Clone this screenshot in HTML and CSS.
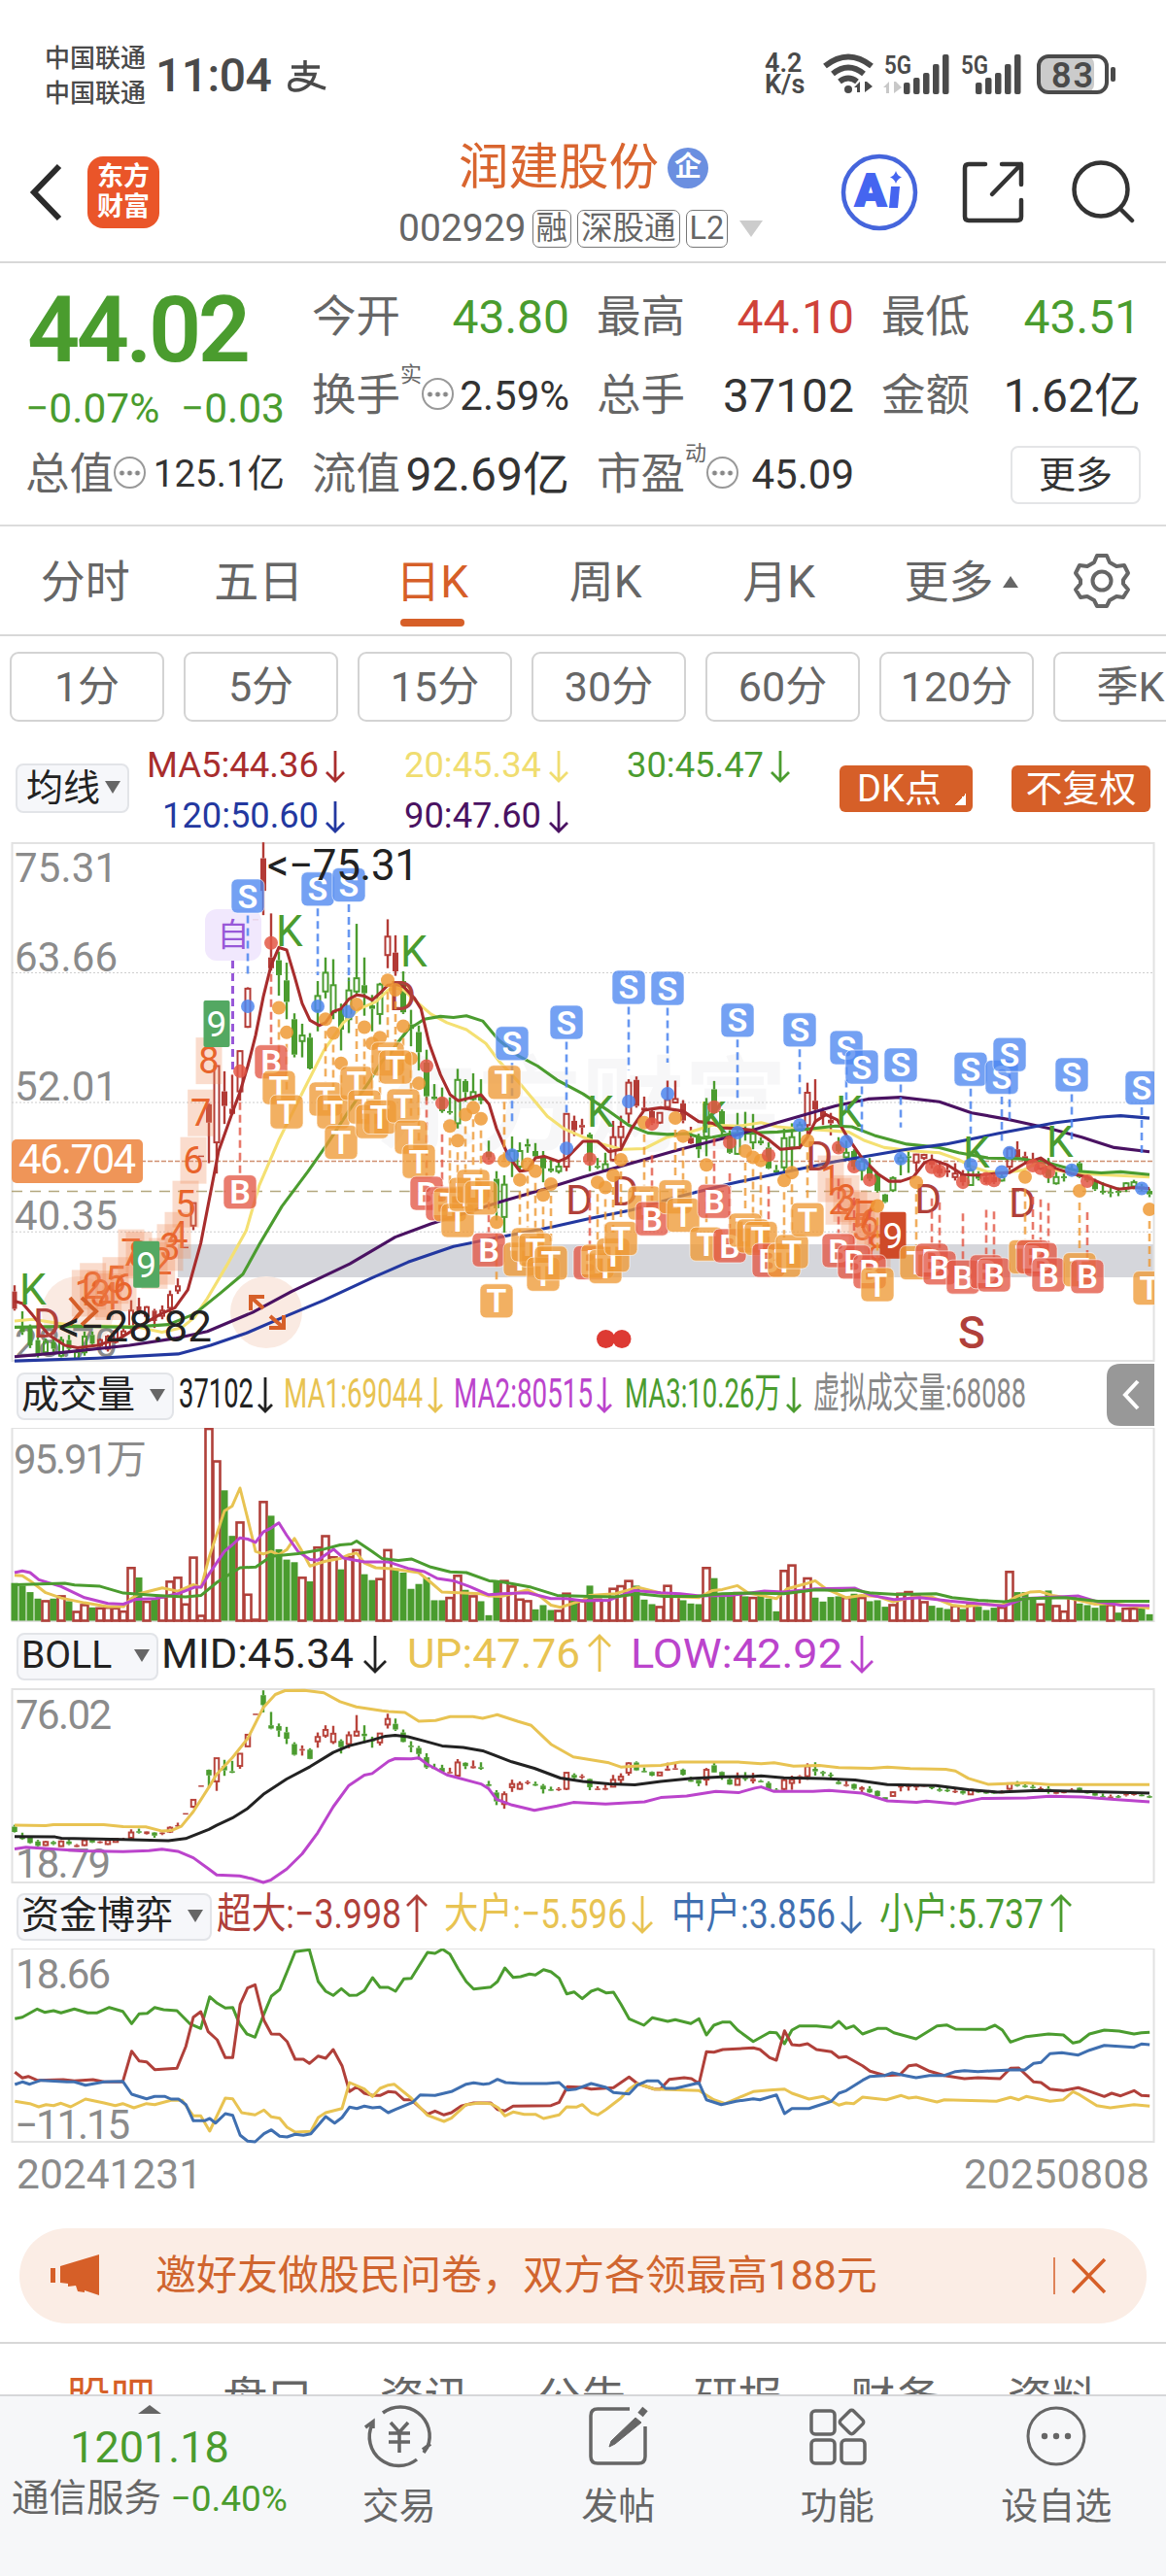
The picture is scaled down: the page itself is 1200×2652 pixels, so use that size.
FILE: index.html
```html
<!DOCTYPE html>
<html lang="zh-CN">
<head>
  <meta charset="UTF-8">
  <meta name="viewport" content="width=device-width, initial-scale=1.0">
  <title>润建股份 002929</title>
  <link rel="stylesheet" href="styles.css">
</head>
<body>
  <div class="status">
    <div class="carrier"><span>中国联通</span><span>中国联通</span></div>
    <div class="clock">11:04</div>
    <svg class="pay" width="42" height="34" viewBox="0 0 42 34" fill="none" stroke="#4a4a4a" stroke-width="3.500">
      <path d="M19 0 V14 M5 7 H34 M8 14.500 H29 C27 24 17 32 8 31 C1 30 1 22 8 20 C16 18 26 25 40 29"/>
    </svg>
    <div class="speed"><span>4.2</span><span>K/s</span></div>
    <svg class="status-icons" width="304" height="48" viewBox="845 53 304 48">
      <g fill="none" stroke="#4a4a4a" stroke-width="6">
        <path d="M849 68 Q873 49 897 68"/>
        <path d="M857 76 Q873 63 889 76"/>
        <path d="M864 84 Q873 77 882 84"/>
      </g>
      <circle cx="873" cy="92" r="4" fill="#4a4a4a"/>
      <path d="M879 90 l6 -6 v11 h-3 v-5z M890 95 v-11 h2 l6 5z" fill="#4a4a4a"/>
      <path d="M909 90 l6 -6 v12 h-3 v-6z M920 96 v-12 h2 l6 6z" fill="#c8c8c8"/>
      <g fill="#4a4a4a">
        <rect x="930" y="85" width="6.500" height="12" rx="2"/><rect x="940" y="80" width="6.500" height="17" rx="2"/>
        <rect x="950" y="75" width="6.500" height="22" rx="2"/><rect x="960" y="66" width="6.500" height="31" rx="2"/>
        <rect x="970" y="56" width="6.500" height="41" rx="2"/>
        <rect x="1004" y="85" width="6.500" height="12" rx="2"/><rect x="1014" y="80" width="6.500" height="17" rx="2"/>
        <rect x="1024" y="75" width="6.500" height="22" rx="2"/><rect x="1034" y="66" width="6.500" height="31" rx="2"/>
        <rect x="1044" y="56" width="6.500" height="41" rx="2"/>
        <rect x="1143" y="69" width="5" height="15" rx="2"/>
      </g>
      <rect x="1069" y="58" width="57" height="37" rx="8" fill="#cbcbcb"/>
      <rect x="1069" y="58" width="70" height="37" rx="10" fill="none" stroke="#4a4a4a" stroke-width="4"/>
      <g class="signal-text">
        <text x="910" y="76" textLength="28" lengthAdjust="spacingAndGlyphs">5G</text>
        <text x="989" y="76" textLength="28" lengthAdjust="spacingAndGlyphs">5G</text>
        <text class="battery" x="1082" y="90" textLength="43">83</text>
      </g>
    </svg>
  </div>

  <header class="header">
    <svg class="back" width="36" height="60" viewBox="0 0 36 60"><path d="M31 3 L5 30 L31 57" fill="none" stroke="#2b2b2b" stroke-width="6"/></svg>
    <div class="logo"><span>东方</span><span>财富</span></div>
    <div class="title">
      <div class="name">润建股份<span class="corp">企</span></div>
      <div class="code">002929<span class="tag">融</span><span class="tag">深股通</span><span class="tag">L2</span><i class="caret"></i></div>
    </div>
    <svg class="actions" width="306" height="84" viewBox="862 156 306 84">
      <circle cx="905" cy="198" r="37" fill="none" stroke="#4565dc" stroke-width="4.500"/>
      <text class="ai" x="880" y="212">A</text>
      <path d="M917 192 h9 l-2 22 h-9z" fill="#4565f0"/>
      <path d="M922 176 q1.500 5 6 6.500 q-4.500 1.500 -6 6.500 q-1.500 -5 -6 -6.500 q4.500 -1.500 6 -6.500z" fill="#4565f0"/>
      <g fill="none" stroke="#333" stroke-width="4.500" stroke-linecap="round" stroke-linejoin="round">
        <path d="M1014 169 H997 Q993 169 993 173 V223 Q993 227 997 227 H1047 Q1051 227 1051 223 V206"/>
        <path d="M1031 169 H1051 V190 M1051 169 L1021 200"/>
        <circle cx="1133" cy="195" r="27.500"/>
        <path d="M1153 215 L1165 227"/>
      </g>
    </svg>
  </header>

  <section class="quote">
    <div class="quote-main">
      <div class="price">44.02</div>
      <div class="change"><span>−0.07%</span><span>−0.03</span></div>
      <div class="cell"><label>总值</label><i class="info"></i><b class="small">125.1亿</b></div>
    </div>
    <div class="quote-grid">
      <div class="cell"><label>今开</label><b class="down">43.80</b></div>
      <div class="cell"><label>最高</label><b class="up">44.10</b></div>
      <div class="cell"><label>最低</label><b class="down">43.51</b></div>
      <div class="cell"><label>换手</label><sup>实</sup><i class="info"></i><b class="mid">2.59%</b></div>
      <div class="cell"><label>总手</label><b>37102</b></div>
      <div class="cell"><label>金额</label><b>1.62亿</b></div>
      <div class="cell"><label>流值</label><b>92.69亿</b></div>
      <div class="cell"><label>市盈</label><sup>动</sup><i class="info"></i><b class="mid">45.09</b></div>
      <div class="cell"><button class="more">更多</button></div>
    </div>
  </section>

  <nav class="period">
    <a>分时</a><a>五日</a><a class="active">日K</a><a>周K</a><a>月K</a><a class="wide">更多<i class="caret-up"></i></a>
    <svg class="gear" width="60" height="60" viewBox="-30 -30 60 60" fill="none" stroke="#666" stroke-width="4" stroke-linejoin="round">
      <path d="M-5 -26 H5 L8 -19 L15 -15 L23 -16 L27 -8 L22 -1 V3 L27 9 L22 17 L15 16 L8 20 L5 26 H-5 L-8 20 L-15 16 L-22 17 L-27 9 L-22 3 V-1 L-27 -8 L-23 -16 L-15 -15 L-8 -19z"/>
      <circle r="9.500"/>
    </svg>
  </nav>

  <div class="minutes">
    <span>1分</span><span>5分</span><span>15分</span><span>30分</span><span>60分</span><span>120分</span><span>季K</span>
  </div>

  <div class="ma">
    <button class="pick ma-pick">均线<i class="caret-down"></i></button>
    <svg class="ma-values" id="maLegend" width="680" height="96" viewBox="150 764 680 96"></svg>
    <button class="solid dk">DK点</button>
    <button class="solid">不复权</button>
  </div>

  <svg class="plot" id="priceChart" width="1200" height="540" viewBox="0 864 1200 540"></svg>

  <div class="legend">
    <button class="pick vol-pick">成交量<i class="caret-down"></i></button>
    <svg id="volLegend" width="1017" height="66" viewBox="183 1404 1017 66"></svg>
  </div>
  <svg class="plot" id="volChart" width="1200" height="202" viewBox="0 1470 1200 202"></svg>

  <div class="legend">
    <button class="pick boll-pick">BOLL<i class="caret-down"></i></button>
    <svg id="bollLegend" width="1033" height="66" viewBox="167 1672 1033 66"></svg>
  </div>
  <svg class="plot" id="bollChart" width="1200" height="202" viewBox="0 1738 1200 202"></svg>

  <div class="legend">
    <button class="pick fund-pick">资金博弈<i class="caret-down"></i></button>
    <svg id="fundLegend" width="979" height="66" viewBox="221 1940 979 66"></svg>
  </div>
  <svg class="plot" id="fundChart" width="1200" height="202" viewBox="0 2006 1200 202"></svg>

  <div class="dates"><span>20241231</span><span>20250808</span></div>

  <div class="notice">
    <svg width="52" height="44" viewBox="0 0 52 44" fill="#d65f28"><path d="M0 14 h5 v15 h-5z M10 12 L50 0 V42 L35 37 V39 L28 38 L26 32 L18 33 V30 L10 29z"/></svg>
    <p>邀好友做股民问卷，双方各领最高188元</p>
    <svg class="close" width="56" height="40" viewBox="0 0 56 40" fill="none" stroke="#d65f28"><path d="M1 1 V39" stroke-width="1.500"/><path d="M20 3 L53 37 M53 3 L20 37" stroke-width="3.500"/></svg>
  </div>

  <nav class="info-tabs">
    <a class="active">股吧</a><a>盘口</a><a>资讯</a><a>公告</a><a>研报</a><a>财务</a><a>资料</a>
  </nav>

  <footer class="bottom">
    <div class="index">
      <i class="caret-up"></i>
      <strong>1201.18</strong>
      <p>通信服务 <em>−0.40%</em></p>
    </div>
    <a>
      <svg width="74" height="66" viewBox="-37 -33 74 66" fill="none" stroke="#666" stroke-width="3.500">
        <path d="M-17 -24 A30 30 0 0 1 29 11 M24 14 L32 8 M29 11 L25 17"/>
        <path d="M18 24 A30 30 0 0 1 -28 -12 M-35 -9 L-27 -15 V-8"/>
        <path d="M-9 -14 L0 -4 L9 -14 M0 -4 V17 M-11 -3 H11 M-11 6 H11"/>
      </svg>交易</a>
    <a>
      <svg width="74" height="66" viewBox="-37 -33 74 66" fill="none" stroke="#666" stroke-width="3.500">
        <path d="M12 -28 H-21 Q-28 -28 -28 -21 V21 Q-28 28 -21 28 H21 Q28 28 28 21 V-10"/>
        <path d="M18 -19 L24 -14 L-3 8 L-9 11 L-7 5z" fill="#666" stroke-width="1"/><path d="M23 -22 L28 -28" stroke-width="7"/>
      </svg>发帖</a>
    <a>
      <svg width="74" height="66" viewBox="-37 -33 74 66" fill="none" stroke="#666" stroke-width="3.500">
        <rect x="-27" y="-26" width="24" height="24" rx="4"/><rect x="-27" y="4" width="24" height="24" rx="4"/><rect x="4" y="4" width="24" height="24" rx="4"/>
        <rect x="5" y="-24" width="19" height="19" rx="3" transform="rotate(45 14.500 -14.500)"/>
      </svg>功能</a>
    <a>
      <svg width="74" height="66" viewBox="-37 -33 74 66" fill="none" stroke="#666" stroke-width="3">
        <circle r="29"/><g fill="#666" stroke="none"><circle cx="-12" r="3.200"/><circle r="3.200"/><circle cx="12" r="3.200"/></g>
      </svg>设自选</a>
  </footer>
  <script src="charts.js"></script>
</body>
</html>
```
FILE: styles.css
```css
* {
  box-sizing: border-box;
}
body {
  margin: 0;
  width: 1200px;
  overflow-x: hidden;
  background: #fff;
  color: #333;
  font-family: Roboto, "Noto Sans CJK SC", sans-serif;
  line-height: 1;
}
button {
  font-family: inherit;
  line-height: 1;
  padding: 0;
}
svg {
  display: block;
  flex: none;
}
svg text {
  white-space: pre;
}

/* status bar */
.status {
  display: flex;
  height: 136px;
  padding: 42px 0 0 46px;
  color: #4a4a4a;
  font-weight: 500;
}
.carrier {
  display: flex;
  flex-direction: column;
  width: 114px;
  font-size: 26px;
  line-height: 36px;
}
.clock {
  width: 135px;
  font-size: 48px;
  line-height: 72px;
  letter-spacing: -0.5px;
}
.pay {
  margin: 20px 450px 0 0;
}
.speed {
  display: flex;
  flex-direction: column;
  width: 58px;
  padding-top: 12px;
  font-size: 27px;
  font-weight: 600;
  line-height: 22px;
}
.status-icons {
  margin-top: 11px;
}
.signal-text {
  font-size: 26px;
  font-weight: 600;
  fill: #4a4a4a;
}
.battery {
  font-size: 36px;
}

/* header */
.header {
  display: flex;
  align-items: flex-start;
  height: 135px;
  border-bottom: 2px solid #d8d8d8;
}
.back {
  margin: 32px 24px 0 30px;
}
.logo {
  display: flex;
  flex-direction: column;
  justify-content: center;
  width: 74px;
  height: 74px;
  margin-top: 25px;
  border-radius: 16px;
  background: #ea5529;
  color: #fff;
  font-size: 27px;
  font-weight: 700;
  line-height: 31px;
  text-align: center;
}
.title {
  width: 698px;
  padding-left: 246px;
}
.name {
  display: flex;
  align-items: center;
  gap: 9px;
  height: 74px;
  padding-left: 62px;
  color: #d9652f;
  font-size: 51.500px;
}
.corp {
  width: 42px;
  height: 42px;
  border-radius: 50%;
  background: #6b8fe0;
  color: #fff;
  font-size: 28px;
  font-weight: 700;
  line-height: 40px;
  text-align: center;
}
.code {
  display: flex;
  align-items: center;
  gap: 6px;
  height: 50px;
  color: #666;
  font-size: 39px;
}
.tag {
  padding: 0 3px;
  border: 1.500px solid #777;
  border-radius: 7px;
  font-size: 32.500px;
  line-height: 37px;
}
.caret {
  margin-left: 6px;
  border: 12px solid transparent;
  border-top: 17px solid #ccc;
  border-bottom: 0;
}
.actions {
  margin-top: 20px;
}
.ai {
  font-size: 47px;
  font-weight: 900;
  fill: #4565f0;
  stroke: #4565f0;
  stroke-width: 2px;
}

/* quote */
.quote {
  display: flex;
  gap: 28px;
  height: 271px;
  padding: 15px 26px 0 26px;
  border-bottom: 2px solid #dcdcdc;
}
.quote-main {
  width: 267px;
}
.price {
  height: 105px;
  padding-left: 2px;
  color: #4a9c2e;
  font-size: 95px;
  font-weight: 600;
  line-height: 108px;
  letter-spacing: -3.500px;
}
.change {
  display: flex;
  justify-content: space-between;
  height: 57px;
  color: #4a9c2e;
  font-size: 42.500px;
  line-height: 59px;
}
.quote-grid {
  display: grid;
  flex: 1;
  grid-template-columns: 265px 265px 1fr;
  grid-auto-rows: 81px;
  column-gap: 28px;
}
.cell {
  display: flex;
  align-items: center;
  height: 81px;
  white-space: nowrap;
}
.cell label {
  color: #666;
  font-size: 45.500px;
}
.cell b {
  margin-left: auto;
  font-size: 48px;
  font-weight: 400;
}
.cell .mid {
  font-size: 42px;
}
.cell .small {
  font-size: 38.500px;
}
.cell .down {
  color: #4a9c2e;
}
.cell .up {
  color: #cf4239;
}
.cell sup {
  align-self: flex-start;
  margin-top: 8px;
  color: #666;
  font-size: 22px;
}
.info {
  width: 33px;
  height: 33px;
  margin-top: -4px;
  border: 2.500px solid #999;
  border-radius: 50%;
  background: radial-gradient(circle, #888 2.200px, transparent 2.800px) center / 8px 8px content-box;
  background-position: 50% 50%;
  background-repeat: repeat-x;
  padding: 0 2px;
}
.more {
  width: 134px;
  height: 60px;
  margin-left: auto;
  border: 2px solid #e4e5e7;
  border-radius: 8px;
  background: #fff;
  color: #333;
  font-size: 38px;
}

/* period tabs */
.period {
  display: flex;
  align-items: flex-start;
  height: 113px;
  border-bottom: 2px solid #d8d8d8;
  color: #666;
  font-size: 46px;
}
.period a {
  display: flex;
  flex-direction: column;
  align-items: center;
  width: 178.500px;
  padding: 34px 3px 0 0;
}
.period .active {
  color: #d65f28;
}
.period .active::after {
  width: 66px;
  height: 8px;
  margin-top: 15px;
  border-radius: 4px;
  background: #d65f28;
  content: "";
}
.period .wide {
  flex-direction: row;
  width: 211px;
  padding-left: 38px;
}
.caret-up {
  margin-left: 9px;
  border: 8px solid transparent;
  border-top: 0;
  border-bottom: 12px solid #666;
}
.gear {
  margin-top: 26px;
}
.minutes {
  display: flex;
  gap: 20px;
  height: 104px;
  padding: 16px 0 0 10px;
}
.minutes span {
  flex: none;
  width: 159px;
  height: 72px;
  border: 2px solid #d3d3d3;
  border-radius: 9px;
  color: #666;
  font-size: 43px;
  line-height: 68px;
  text-align: center;
}

/* moving average row */
.ma {
  display: flex;
  align-items: center;
  height: 105px;
  padding-left: 16px;
}
.pick {
  display: flex;
  flex: none;
  align-items: center;
  justify-content: space-between;
  height: 49px;
  padding: 0 7px 2px 3px;
  border: 2px solid #e2e4e8;
  border-radius: 8px;
  background: #f6f7fa;
  color: #222;
  font-size: 39px;
}
.vol-pick {
  width: 162px;
}
.boll-pick {
  width: 146px;
}
.fund-pick {
  width: 201px;
}
.caret-down {
  border: 8px solid transparent;
  border-top: 13px solid #666;
  border-bottom: 0;
}
.ma-pick {
  height: 51px;
  width: 117px;
  padding: 0 7px 2px 9px;
  font-size: 38px;
}
.ma-values {
  margin: 0 34px 0 17px;
}
.solid {
  flex: none;
  width: 143px;
  height: 48px;
  margin-right: 40px;
  border: 0;
  border-radius: 6px;
  background: #d65f28;
  color: #fff;
  font-size: 38px;
}
.dk {
  width: 137px;
  padding-right: 14px;
  background: linear-gradient(135deg, transparent 50%, #fff 50%) 118px 29px / 12px 12px no-repeat #d65f28;
}

/* charts */
.legend {
  display: flex;
  align-items: center;
  gap: 4px;
  height: 66px;
  padding-left: 17px;
}
.legend text {
  font-size: 43px;
}
.ma-values text {
  font-size: 36.500px;
}
.axis {
  fill: #8b8b8b;
  font-size: 42px;
}
.dates {
  display: flex;
  justify-content: space-between;
  padding: 6px 17px 0;
  color: #8b8b8b;
  font-size: 42.500px;
  line-height: 50px;
}

/* notice */
.notice {
  display: flex;
  align-items: center;
  height: 98px;
  margin: 30px 20px 19px;
  padding: 0 40px 0 32px;
  border-radius: 49px;
  background: #fbede5;
  color: #d0652f;
  font-size: 42px;
}
.notice p {
  margin: 0 auto 0 56px;
}
.info-tabs {
  display: flex;
  height: 54px;
  overflow: hidden;
  padding: 33px 0 0 33px;
  border-top: 2px solid #d8d8d8;
  color: #666;
  font-size: 46px;
}
.info-tabs a {
  width: 161.500px;
  text-align: center;
}
.info-tabs .active {
  color: #d65f28;
}
.bottom {
  display: flex;
  height: 187px;
  border-top: 2px solid #d6d7d9;
  background: #f6f7f9;
  color: #666;
  font-size: 38px;
}
.bottom a {
  display: flex;
  flex-direction: column;
  align-items: center;
  gap: 20px;
  width: 225.500px;
  padding-top: 8px;
}
.index {
  display: flex;
  flex-direction: column;
  align-items: center;
  width: 298px;
  padding: 9px 0 0 10px;
}
.index .caret-up {
  border-width: 0 12px 9px;
  margin: 0;
}
.index strong {
  margin-top: 12px;
  color: #4a9c2e;
  font-size: 45px;
  font-weight: 400;
  line-height: 46px;
}
.index p {
  margin: 10px 0 0;
  font-size: 38.500px;
  white-space: nowrap;
}
.index em {
  color: #4a9c2e;
  font-size: 37px;
  font-style: normal;
}
```
FILE: charts.js
```js
const RED = '#b0403a';
const GREEN = '#4b9c2f';
const GOLD = '#e8c352';
const PINK = '#bb44cc';
const BLUE = '#3f6fb0';

// kind (upper case = hollow), high, top, bottom, low, volume top
const candles = [
  ['r',1297,1315,1365,1370,507],['g',1372,1415,1432,1440,515],['g',1410,1420,1470,1478,535],['g',1440,1455,1497,1505,555],
  ['G',1450,1460,1490,1497,560],['g',1450,1460,1480,1490,555],['G',1445,1455,1500,1505,545],['g',1440,1455,1480,1490,563],
  ['G',1480,1490,1508,1512,593],['G',1430,1445,1490,1500,572],['g',1430,1440,1465,1470,582],['R',1450,1455,1470,1475,582],
  ['R',1440,1445,1480,1488,580],['R',1425,1430,1460,1465,582],['R',1420,1430,1440,1445,592],['R',1340,1370,1420,1425,458],
  ['r',1333,1358,1372,1380,490],['R',1357,1360,1385,1390,562],['r',1365,1370,1400,1420,558],['R',1355,1370,1385,1395,548],
  ['R',1312,1325,1362,1375,500],['R',1277,1300,1312,1322,488],['R',1186,1186,1187,1187,570],['R',1060,1060,1125,1138,426],
  ['R',923,923,924,924,605],['r',772,775,828,945,30],['R',665,665,885,975,130],['r',680,738,780,832,222],
  ['r',690,788,803,806,362],['R',620,622,738,765,318],['R',438,442,552,555,540],['R',241,241,242,242,617],
  ['r',20,66,160,230,255],['r',225,352,383,390,300],['g',335,360,403,462,403],['g',367,418,480,530,435],
  ['g',513,530,632,640,443],['G',543,577,593,640,488],['g',570,583,672,675,502],['G',420,463,505,565,395],
  ['G',352,396,450,470,360],['G',357,432,510,530,425],['g',485,500,560,620,465],['G',410,447,530,570,425],
  ['G',255,412,450,460,403],['g',352,432,455,520,480],['g',460,490,500,565,498],['G',425,430,515,545,492],
  ['R',242,292,345,383,403],['r',288,338,392,405,462],['g',392,420,510,515,475],['g',503,545,558,608,525],
  ['g',548,567,625,678,510],['g',618,655,752,765,490],['g',717,753,760,763,560],['g',727,757,795,800,560],
  ['G',755,795,800,805,550],['G',673,705,830,845,482],['g',703,708,740,768,528],['G',686,740,760,765,545],
  ['g',703,750,765,775,563],['g',880,912,928,935,606],['g',968,990,1075,1110,500],['G',980,1007,1100,1145,498],
  ['G',868,910,940,985,515],['G',885,910,955,965,555],['G',875,890,897,915,560],['g',887,910,925,930,588],
  ['g',910,925,960,1000,575],['g',935,960,968,972,590],['G',940,955,968,975,590],['R',802,803,955,968,537],
  ['r',808,823,850,867,560],['R',817,835,842,862,560],['g',857,862,940,968,515],['G',930,953,958,962,555],
  ['G',915,948,965,970,558],['R',823,870,935,940,522],['R',808,840,870,910,514],['R',703,713,802,830,498],
  ['r',695,705,780,785,515],['r',753,785,793,795,558],['r',790,795,830,835,572],['R',800,800,828,832,578],
  ['R',707,763,783,785,513],['R',707,760,770,773,545],['r',763,773,822,830,560],['r',840,872,888,890,570],
  ['g',860,870,905,930,572],['G',757,775,868,925,458],['g',708,732,800,802,492],['g',790,795,835,870,545],
  ['g',850,865,915,918,540],['G',800,860,918,920,535],['g',797,850,860,880,548],['G',803,860,885,905,550],
  ['g',870,880,888,893,545],['g',885,900,960,962,555],['g',950,965,972,975,594],['G',840,873,957,970,467],
  ['G',830,870,900,965,450],['G',825,835,850,905,530],['R',713,742,835,870,490],['r',703,765,790,830,552],
  ['r',785,795,810,835,564],['r',800,820,830,865,550],['g',870,890,910,915,548],['G',880,915,928,935,550],
  ['g',905,910,955,965,540],['G',930,940,965,995,550],['g',930,955,990,997,563],['g',970,975,1025,1030,560],
  ['g',1033,1035,1057,1060,580],['G',983,988,1023,1028,572],['G',920,930,940,980,537],['G',910,925,930,973,532],
  ['R',918,920,943,970,540],['R',918,921,930,935,563],['r',920,935,950,960,577],['r',943,960,975,983,583],
  ['r',950,965,972,985,587],['R',945,975,985,995,575],['r',965,975,1000,1010,587],['G',955,965,1008,1010,572],
  ['g',968,975,990,995,580],['r',975,985,1000,1005,590],['r',975,985,1000,1005,583],['G',970,985,995,998,580],
  ['R',900,903,955,965,470],['r',882,905,928,935,535],['r',912,925,935,945,535],['r',915,935,945,955,555],
  ['R',935,950,960,965,570],['g',930,955,985,1002,530],['G',970,985,1003,1007,575],['G',975,983,988,998,592],
  ['G',950,965,975,980,550],['g',940,945,985,988,570],['g',975,985,995,1000,575],['g',990,995,1020,1025,583],
  ['g',1000,1025,1030,1035,572],['G',1010,1028,1032,1043,572],['g',1015,1025,1030,1040,598],['G',1000,1003,1018,1028,583],
  ['G',993,1000,1012,1020,583],['g',1005,1012,1020,1025,585],['g',1018,1025,1035,1043,603]
];

// markers: candle index, badge centre, dot centre
const sells = [[30,175,493],[39,155,493],[43,143,508],[64,600,922],[71,539,902],[79,438,767],[84,441,745],[93,533,857],
  [101,561,835],[107,612,883],[109,668,948],[114,662,932],[123,674,950],[127,697,970],[128,632,915],[136,690,965],[145,728,1018]];
const trades = [[34,727,497],[35,797,568],[40,760,530],[41,797,570],[42,885,657],[44,715,487],[45,783,553],[46,825,600],
  [47,812,583],[48,645,418],[49,668,445],[50,780,550],[51,870,643],[52,940,715],[56,1065,838],[57,1110,880],[58,1035,805],
  [59,1012,785],[60,1045,817],[62,1342,1115],[63,712,938],[65,1222,993],[66,1180,948],[67,1195,968],[68,1265,1037],
  [69,1233,1005],[75,1228,1000],[76,1243,1015],[77,1210,980],[78,1162,935],[81,1060,828],[85,1042,815],[86,1095,867],
  [89,1178,950],[94,1138,910],[95,1155,928],[96,1162,937],[99,1225,995],[100,1200,972],[102,1108,880],[111,1295,1068],
  [116,1232,1000],[130,1215,985],[137,1252,1025],[146,1305,1078]];
const buys = [[29,1028,680],[33,653,310],[53,1032,665],[55,1062,772],[61,1195,930],[74,1232,933],[82,1105,832],[90,1055,783],
  [92,1183,885],[97,1225,922],[106,1197,900],[108,1230,955],[110,1258,993],[118,1225,957],[119,1247,968],[122,1273,1000],
  [125,1258,990],[126,1267,995],[131,1215,952],[132,1223,960],[133,1267,970],[138,1272,997]];

// each line is made of three runs of x,y pairs (left, middle and right part)
const maLines = [
  ['#f4e072', '45,1400 100,1395 240,1415 350,1415 430,1418 500,1432 560,1420 600,1390 640,1335 700,1240 760,1140 800,1010 860,880 940,730 1000,620 1060,540 1110,500 1160,480 1200,445',
    '20,440 45,445 80,475 130,515 180,540 240,560 300,600 340,650 400,710 450,765 490,810 540,845 600,870 660,890 720,905 790,903 860,870 930,855 1000,835 1080,838 1150,828',
    '0,840 60,845 150,850 220,855 270,880 330,900 420,910 500,915 560,935 600,955 650,970 700,972 760,965 800,945 860,965 930,975 1149,985'],
  ['#4b9c2f', '45,1418 240,1415 400,1418 520,1410 600,1380 680,1320 750,1265 800,1180 870,1070 950,970 1010,890 1080,790 1140,710 1180,650',
    '0,635 30,595 60,560 110,530 160,522 200,525 240,520 290,535 340,590 400,635 460,665 520,705 600,745 680,795 740,835 800,858 860,862 920,860 970,873 1000,870 1060,860',
    '0,855 80,848 180,838 230,840 300,865 400,890 500,900 560,915 650,930 750,932 840,945 930,968 1000,973 1060,970 1149,978'],
  ['#4a1262', '45,1503 200,1490 400,1470 540,1450 640,1430 780,1375 900,1315 1080,1235',
    '20,1158 130,1120 250,1085 350,1055 480,1020 600,985 750,945 900,905 1080,862',
    '0,828 60,812 180,780 280,760 380,755 500,768 600,800 720,820 840,845 940,870 1040,900 1149,912'],
  ['#2338a0', '45,1515 300,1507 550,1495 650,1470 760,1435 860,1395 1000,1340 1150,1275',
    '0,1255 60,1230 200,1185 360,1155 500,1130 620,1105 750,1080 900,1040 1050,1005',
    '0,975 180,940 400,905 520,890 680,860 860,828 1000,812 1060,808 1149,815'],
  ['#a82d2d', '45,1343 70,1350 100,1382 150,1440 200,1470 240,1477 300,1470 370,1450 430,1415 500,1378 540,1362 580,1310 620,1175 650,1030 675,910 717,800 741,740 765,665 789,577 813,465 837,375 861,323 885,330 909,405 933,485 957,533 985,548 1005,540 1029,508 1053,500 1077,472 1101,460 1125,463 1149,475 1173,455 1197,432',
    '21,430 45,435 80,470 100,500 125,600 160,690 190,748 215,765 260,755 285,748 310,775 333,845 370,925 405,968 430,965 453,930 480,925 525,940 550,930 600,882 645,882 680,912 717,905 750,845 789,792 840,785 909,795 957,825 1000,830 1030,843 1077,845 1125,850 1170,875',
    '10,905 69,900 93,870 117,825 150,805 185,820 213,865 261,930 309,975 345,997 381,997 420,985 453,945 477,935 525,950 573,978 621,980 669,975 717,972 765,945 813,930 860,960 909,975 957,985 1005,1005 1053,1020 1101,1015 1149,1018']
];
const volLines = [
  [GOLD, '45,483 69,485 93,500 141,537 189,553 261,568 333,580 381,580 405,555 430,540 501,522 549,532 597,512 621,520 645,430 693,285 717,270 741,215 765,310 789,410 813,418 837,410 861,420 885,405 909,370 933,410 957,455 1005,440 1050,432 1077,420 1101,415 1125,445 1160,460',
    '10,463 93,475 130,505 165,535 285,540 309,547 350,548 429,528 470,550 501,575 530,582 600,560 620,545 700,540 770,520 830,535 870,548 957,552 1000,530 1030,527 1077,515 1110,538',
    '10,545 57,555 90,525 153,508 177,500 210,525 273,552 320,545 369,548 417,565 480,550 537,550 600,575 640,580 700,572 753,575 800,548 840,535 870,533 909,545 969,555 1041,572 1089,570 1161,578 1209,585'],
  [PINK, '45,475 69,470 93,475 120,497 189,518 261,552 333,570 381,572 420,557 480,555 549,540 600,520 621,520 645,480 693,410 717,390 741,368 765,372 789,382 813,350 837,338 861,322 885,360 920,410 957,435 981,437 1030,403 1060,430 1125,442 1197,442',
    '60,462 110,472 150,493 200,500 250,518 309,543 350,540 429,537 501,555 549,555 600,562 680,560 760,530 840,537 900,540 960,547 1053,545 1100,540',
    '20,532 80,535 177,525 300,523 350,545 420,558 500,552 600,563 700,572 760,578 820,555 990,547 1050,565 1120,575 1209,577'],
  [GREEN, '45,512 200,508 230,513 309,517 381,538 480,545 573,550 621,545 670,505 717,475 741,460 790,458 837,425 920,417 1000,403 1050,390 1085,387 1101,378 1149,410 1180,432',
    '30,438 70,433 130,458 190,473 240,475 310,500 357,505 440,520 520,545 620,548 700,550 770,540 850,548 950,548 1030,540 1110,538',
    '80,540 177,528 260,530 297,528 350,538 430,542 550,540 600,552 680,560 760,565 830,555 950,552 1050,563 1209,563']
];
const bollLines = [
  [GOLD, '45,1252 141,1253 165,1250 320,1250 380,1256 450,1257 501,1270 530,1268 560,1255 597,1210 645,1135 669,1095 717,1045 765,985 813,890 850,850 880,838 940,837 1000,845 1050,872 1100,888 1180,900',
    '0,902 50,905 93,932 145,930 190,918 260,918 290,923 335,912 400,933 440,945 501,1003 570,1042 680,1060 717,1073 760,1070 840,1068 900,1058 1080,1058',
    '10,1063 50,1060 110,1070 190,1068 250,1075 350,1077 400,1073 470,1078 580,1080 610,1085 650,1108 710,1126 830,1122 900,1127 1209,1127'],
  ['#222', '45,1287 170,1288 190,1292 380,1296 520,1300 573,1293 645,1265 669,1252 717,1230 765,1200 813,1157 885,1110 957,1072 1029,1028 1077,1008 1149,990 1190,978',
    '20,975 60,980 110,993 165,1008 230,1013 290,1023 380,1057 450,1077 530,1107 600,1117 680,1125 760,1128 840,1117 930,1108 1030,1103 1120,1102',
    '10,1100 80,1106 200,1108 300,1113 400,1127 550,1130 650,1143 740,1150 870,1145 1209,1153'],
  [PINK, '45,1325 80,1320 160,1325 250,1331 380,1333 460,1330 500,1326 549,1332 597,1352 645,1387 669,1405 740,1408 780,1417 813,1428 837,1420 885,1387 933,1340 981,1275 1029,1195 1077,1130 1125,1098 1149,1093 1200,1055',
    '20,1047 70,1048 93,1045 120,1065 180,1097 285,1125 309,1140 333,1172 381,1190 450,1206 520,1193 570,1182 670,1187 790,1180 840,1167 920,1162 1010,1148 1080,1152 1130,1138',
    '10,1134 50,1148 170,1148 220,1145 320,1153 400,1177 490,1182 520,1178 610,1186 690,1170 830,1168 900,1163 1000,1165 1100,1173 1209,1180']
];
const fundLines = [
  [GREEN, '20,415 30,410 50,385 60,395 72,390 82,397 100,385 118,397 130,397 147,380 165,392 177,430 187,400 198,398 208,380 220,387 238,390 255,430 270,445 282,347 292,367 303,382 313,380 322,430 332,462 343,472 355,400 365,345 376,325 386,270 397,208 416,202 428,300 438,330 448,343 459,322 470,343 480,342 490,328 501,288 511,318 522,318 532,330 543,292 553,290 575,210 585,213 595,200 605,215 616,260 627,300 637,323 660,317 669,300 679,258 690,287 700,285 712,277 720,280 731,263 741,270 752,290 762,338 772,332 783,353 795,330 804,323 815,335 825,333 835,370 846,415 866,435 877,412 898,423 908,418 929,430 940,415 950,465 960,435 972,425 982,425 992,450 1013,485 1035,457 1044,458 1055,492 1065,450 1075,437 1098,437 1118,442 1128,423 1138,445 1148,437 1160,462 1180,445 1192,445 1202,458 1232,477 1260,437 1273,434 1285,447 1325,448 1338,435 1348,450 1359,487 1380,470 1410,462 1430,465 1443,490 1452,485 1465,462 1485,450 1505,453 1525,462 1535,458 1546,457'],
  [RED, '20,580 30,598 38,593 50,605 85,603 100,607 125,603 140,610 165,610 177,515 187,545 197,548 208,572 238,568 250,500 260,410 270,393 280,455 292,480 303,535 313,535 323,370 333,320 343,310 355,420 365,462 376,463 386,485 397,540 408,540 416,553 428,530 438,537 448,510 460,560 470,640 480,625 490,645 501,652 511,652 522,640 532,642 543,665 553,665 565,690 575,710 585,700 597,712 607,705 620,685 637,675 660,675 669,695 679,700 690,685 741,683 752,673 763,625 785,627 795,632 825,628 846,595 857,615 880,632 888,632 900,602 920,597 930,600 940,615 950,517 960,518 972,510 1013,505 1022,510 1035,535 1044,543 1055,452 1065,495 1075,497 1086,492 1098,510 1118,517 1128,535 1138,532 1160,560 1170,577 1190,590 1210,588 1222,560 1232,557 1250,577 1270,590 1297,600 1315,597 1345,600 1359,568 1370,567 1390,610 1400,612 1412,632 1430,637 1450,628 1460,635 1485,655 1495,645 1507,653 1525,637 1535,652 1546,653'],
  [GOLD, '20,670 40,677 52,687 62,680 72,683 82,676 95,687 115,663 140,675 155,683 165,677 180,690 197,677 208,680 230,667 245,667 260,715 270,715 282,762 303,660 313,662 325,705 343,712 355,697 365,718 376,722 386,750 397,765 418,763 428,720 438,705 460,692 470,612 490,632 501,655 511,630 522,620 530,617 553,660 575,713 597,732 607,722 627,680 645,675 660,677 670,690 679,715 690,703 705,710 720,710 731,723 752,712 762,687 775,688 783,680 795,705 804,712 815,695 835,660 846,632 857,615 880,632 940,637 960,665 975,677 992,660 1013,640 1035,635 1055,632 1065,645 1088,663 1107,655 1128,682 1138,675 1148,677 1160,657 1192,665 1212,652 1222,660 1232,657 1260,672 1270,665 1340,670 1359,658 1370,665 1380,655 1412,670 1430,665 1443,640 1452,650 1475,683 1493,690 1525,680 1546,685'],
  [BLUE, '20,618 30,610 40,617 55,605 90,610 100,610 115,620 140,610 165,608 177,648 197,662 208,655 222,655 230,663 240,663 250,680 260,730 275,730 282,723 290,737 303,708 313,713 323,775 333,793 343,795 355,770 365,758 376,778 386,780 397,772 408,775 418,770 438,717 450,737 460,720 470,688 480,692 490,685 501,690 511,688 522,705 532,695 555,673 565,650 585,652 607,640 627,617 637,613 650,617 658,615 669,602 680,612 700,615 735,615 752,612 763,635 775,632 795,615 815,627 825,643 846,647 857,620 870,607 885,607 895,630 908,630 918,625 940,613 950,665 970,680 990,670 1013,662 1022,665 1044,650 1055,708 1065,692 1088,692 1118,670 1128,645 1138,637 1160,605 1170,593 1190,590 1200,582 1212,588 1232,597 1250,590 1270,590 1285,578 1297,575 1315,578 1359,573 1378,573 1390,553 1400,550 1412,523 1428,520 1450,527 1465,512 1485,497 1505,500 1525,503 1535,493 1546,495']
];

const cx = i => 15 + 8 * i;
const priceY = v => 860 + v / 2.8;
const volY = v => 1460 + v / 2.9875;
const bollY = v => volY((v + 2565) / 3.088);

function line(x1, y1, x2, y2, color, extra = '') {
  return `<line x1="${x1}" y1="${y1}" x2="${x2}" y2="${y2}" stroke="${color}" ${extra}/>`;
}
function rect(x, y, w, h, fill, extra = '') {
  return `<rect x="${x}" y="${y}" width="${w}" height="${h}" fill="${fill}" ${extra}/>`;
}
function text(x, y, value, fill, size, extra = '') {
  return `<text x="${x}" y="${y}" fill="${fill}" font-size="${size}" ${extra}>${value}</text>`;
}
function frame(y, h) {
  return `<rect x="12.5" y="${y + 1}" width="1175" height="${h - 2}" fill="none" stroke="#e2e2e2" stroke-width="2"/>`;
}
function curve(runs, offsets, yScale, color, width) {
  const pts = [];
  runs.forEach((run, r) => run.split(' ').forEach(p => {
    const [x, y] = p.split(',').map(Number);
    pts.push([(offsets[r] + x / 3).toFixed(1), yScale(y).toFixed(1)]);
  }));
  return `<polyline points="${pts.join(' ')}" fill="none" stroke="${color}" stroke-width="${width}" stroke-linejoin="round"/>`;
}
function candle(x, c, y, color, hollow, width) {
  const [, high, top, bottom, low] = c;
  const bodyH = Math.max(y(bottom) - y(top), 1.5);
  return line(x, y(high), x, y(top), color, 'stroke-width="2.4"') + line(x, y(bottom), x, y(low), color, 'stroke-width="2.4"') +
    (hollow && bodyH > 3
      ? rect(x - width / 2 + 0.5, y(top), width - 1, bodyH, 'none', `stroke="${color}" stroke-width="2"`)
      : rect(x - width / 2, y(top), width, bodyH, color));
}
const isHollow = c => c[0] === c[0].toUpperCase();
// bars that closed above their open although the price colour is solid
const risingSolid = [25, 32];

// main price chart
function drawPrice() {
  let s = text(386, 1176, '东方财富', '#f7f7f8', 106, 'font-weight="700"');
  s += rect(183, 1281, 1004, 34, '#d5d6db') + frame(867, 535);
  [396, 770, 1143].forEach(v => s += line(12, priceY(v), 1188, priceY(v), '#ccc', 'stroke-dasharray="2 2"'));
  s += line(12, 1195.5, 1188, 1195.5, '#cf9070', 'stroke-width="1.5" stroke-dasharray="5 2"');
  s += line(12, 1226.5, 1188, 1226.5, '#b3a77e', 'stroke-width="1.3" stroke-dasharray="11 8"');
  s += '<circle cx="80" cy="1351" r="37" fill="#faeae2"/><circle cx="274" cy="1351" r="37" fill="#faeae2"/>';
  [[75.31, 133], [63.66, 391], [52.01, 765], [40.35, 1138], ['28.70', 1503]].forEach(a =>
    s += `<text class="axis" x="15" y="${priceY(a[1])}" textLength="106">${a[0]}</text>`);

  candles.forEach((c, i) => s += candle(cx(i), c, priceY, c[0].toLowerCase() === 'r' ? '#b33b36' : GREEN, isHollow(c), i > 21 ? 6 : 5));
  maLines.forEach(l => s += curve(l.slice(1), [0, 400, 800], priceY, l[0], 3.1));

  // nine-count digits
  const counts = [['8',645,650],['7',620,800],['6',597,937],['5',573,1063],['4',549,1153],['3',525,1188],['2',500,1228],['1',477,1240],
    ['1',262,1320],['2',287,1300],['3',310,1322],['4',335,1330],['5',357,1283],['6',381,1305],['7',405,1203],['8',429,1210],
    ['1',2565,990],['2',2589,1055],['3',2613,1047],['4',2637,1090],['5',2661,1130],['6',2685,1118],['7',2676,1095],['8',2709,1190]];
  counts.forEach(([n, x, v]) => s += rect(x / 3 - 13.5, priceY(v) - 24, 27, 48, '#f08a5a', 'opacity="0.3"') +
    text(x / 3, priceY(v) + 13, n, '#e8642c', 38, 'text-anchor="middle"'));
  [[669, 543, '#53a862'], [452, 1237, '#53a862'], [2757, 1153, '#cf4a28']].forEach(([x, v, f]) =>
    s += rect(x / 3 - 13.5, priceY(v) - 24, 27, 48, f, 'rx="2"') + text(x / 3, priceY(v) + 13, '9', '#fff', 37, 'text-anchor="middle"'));

  s += rect(211, 936, 58, 53, '#efe5fd', 'rx="12" opacity="0.9"') + text(240, 974, '自', '#9858d8', 33, 'text-anchor="middle"');
  s += line(239.5, 989, 239.5, 1106, '#9858d8', 'stroke-width="3" stroke-dasharray="8 5"');

  [[20,1353],[284,320],[412,378],[604,840],[720,857],[860,840],[991,958],[1077,928]].forEach(([x, v]) => s += text(x, priceY(v), 'K', GREEN, 44));
  [[34,1448],[400,505],[582,1092],[629,1067],[829,967],[941,1090],[1038,1100]].forEach(([x, v]) => s += text(x, priceY(v), 'D', RED, 43));

  // badges overlap, later candles lie on top
  const marks = [
    ...buys.map(m => [...m, 'B', '#e35745']),
    ...trades.map(m => [...m, 'T', '#ee9a36']),
    ...sells.map(m => [...m, 'S', '#4d86ef'])
  ].sort((a, b) => a[0] - b[0]);
  s += '<g clip-path="url(#priceClip)">';
  marks.forEach(([i, v, dot, letter, color]) => {
    const x = cx(i), y = priceY(v), d = priceY(dot);
    s += y < d ? line(x, y + 20, x, d - (letter === 'T' ? 0 : 32), color, 'stroke-width="2.6" stroke-dasharray="8 5" opacity="0.85"')
      : line(x, d + (letter === 'T' ? 12 : 32), x, y - 18, color, 'stroke-width="2.6" stroke-dasharray="8 5" opacity="0.8"');
    s += `<circle cx="${x}" cy="${d}" r="7" fill="${color}" opacity="0.85"/>`;
  });
  marks.forEach(([i, v, , letter, color]) => {
    const x = cx(i), y = priceY(v);
    s += rect(x - 17, y - 17.5, 34, 35, color, 'rx="6" fill-opacity="0.78" stroke="#fff" stroke-opacity="0.6"');
    s += text(x, y + 12, letter, '#fff', 34, 'text-anchor="middle" font-weight="600"');
  });
  s += '</g><clipPath id="priceClip"><rect x="12" y="867" width="1176" height="535"/></clipPath>';

  s += '<g fill="none" stroke="#d65f28" stroke-width="4"><path d="M72 1336 L84 1350 L72 1364 M84 1336 L99 1350 L84 1364"/>' +
    '<path d="M258 1349 V1335 H272 M258 1335 L271 1347 M292 1354 V1367 H277 M292 1367 L278 1355"/></g>';
  s += rect(12, 1173, 135, 45, '#ef9558', 'rx="5"') + text(19, 1208, '46.704', '#fff', 42, 'textLength="121"');
  s += text(275, 906, '&lt;−75.31', '#222', 44, 'textLength="156"') + text(60, 1381, '&lt;−28.82', '#222', 44, 'textLength="158"');
  s += text(986, 1388, 'S', RED, 46, 'font-weight="500"');
  s += '<circle cx="623.500" cy="1378.500" r="9.500" fill="#dd3a33"/><circle cx="640" cy="1378.500" r="9.500" fill="#dd3a33"/>';
  document.getElementById('priceChart').innerHTML = s;
}

function drawVolume() {
  const base = 1668.5;
  let s = frame(1469, 201) + '<text class="axis" x="14" y="1517" textLength="137">95.91万</text>';
  candles.forEach((c, i) => {
    const y = volY(c[5]), x = cx(i);
    s += isHollow(c) || risingSolid.includes(i)
      ? rect(x - 3.5, y + 1, 7, base - y - 1, '#fff', `stroke="${RED}" stroke-width="2.6"`)
      : rect(x - 3.5, y, 7, base - y, '#4a9c2e');
  });
  volLines.forEach(l => s += curve(l.slice(1), [0, 400, 780], volY, l[0], 3));
  document.getElementById('volChart').innerHTML = s;
}

function drawBoll() {
  let s = frame(1738, 201);
  s += '<text class="axis" x="16" y="1780" textLength="99">76.02</text><text class="axis" x="16" y="1933" textLength="98">18.79</text>';
  candles.forEach((c, i) => s += candle(cx(i), c, bollY, isHollow(c) ? '#b8443c' : GREEN, isHollow(c), 5.5));
  bollLines.forEach(l => s += curve(l.slice(1), [0, 400, 780], volY, l[0], 3));
  document.getElementById('bollChart').innerHTML = s;
}

function drawFund() {
  let s = frame(2005, 201);
  s += '<text class="axis" x="16" y="2047" textLength="98">18.66</text><text class="axis" x="15" y="2202" textLength="119">−11.15</text>';
  fundLines.forEach(([color, pts]) => {
    const p = pts.split(' ').map(q => q.split(',')).map(([x, y]) => [(x * 0.7653).toFixed(1), (1940 + y / 3).toFixed(1)]);
    s += `<polyline points="${p.join(' ')}" fill="none" stroke="${color}" stroke-width="3" stroke-linejoin="round"/>`;
  });
  document.getElementById('fundChart').innerHTML = s;
}

// legend entries: text, left, right, baseline, color, arrow centre, arrow direction
function legend(id, items, half, height) {
  document.getElementById(id).innerHTML = items.map(([label, x1, x2, y, color, ax, dir]) => {
    let s = `<text x="${x1}" y="${y}" fill="${color}" textLength="${x2 - x1}" lengthAdjust="spacingAndGlyphs">${label}</text>`;
    if (ax) {
      const tip = dir > 0 ? y + 4 : y - height + 4, tail = dir > 0 ? y - height + 4 : y + 4;
      s += `<path d="M${ax} ${tail} V${tip} M${ax - half} ${tip - dir * half} L${ax} ${tip} L${ax + half} ${tip - dir * half}" fill="none" stroke="${color}" stroke-width="2.800"/>`;
    }
    return s;
  }).join('');
}

drawPrice();
drawVolume();
drawBoll();
drawFund();
legend('maLegend', [
  ['MA5:44.36', 151, 328, 800, '#a82d2d', 345, 1], ['20:45.34', 416, 557, 800, '#f0dd70', 575, 1], ['30:45.47', 645, 786, 800, GREEN, 803, 1],
  ['120:50.60', 167, 328, 852, '#2338a0', 345, 1], ['90:47.60', 416, 557, 852, '#4a1262', 575, 1]
], 9, 31);
legend('volLegend', [
  ['37102', 184, 261, 1449, '#222', 273, 1], ['MA1:69044', 292, 435, 1449, GOLD, 448, 1], ['MA2:80515', 467, 610, 1449, PINK, 622, 1],
  ['MA3:10.26万', 643, 804, 1449, GREEN, 817, 1], ['虚拟成交量:68088', 837, 1056, 1449, '#888']
], 7, 35);
document.getElementById('volLegend').innerHTML +=
  '<path d="M1188 1404 H1153 Q1139 1404 1139 1418 V1454 Q1139 1468 1153 1468 H1188z" fill="#989898"/><path d="M1171 1422 L1158 1436 L1171 1450" fill="none" stroke="#fff" stroke-width="4"/>';
legend('bollLegend', [
  ['MID:45.34', 166, 364, 1717, '#222', 386, 1], ['UP:47.76', 419, 597, 1717, GOLD, 617, -1], ['LOW:42.92', 649, 867, 1717, PINK, 887, 1]
], 11, 37);
legend('fundLegend', [
  ['超大:−3.998', 222, 412, 1985, RED, 428, -1], ['大户:−5.596', 456, 644, 1985, GOLD, 660, 1],
  ['中户:3.856', 690, 859, 1985, BLUE, 875, 1], ['小户:5.737', 904, 1073, 1985, GREEN, 1091, -1]
], 10, 37);
```
